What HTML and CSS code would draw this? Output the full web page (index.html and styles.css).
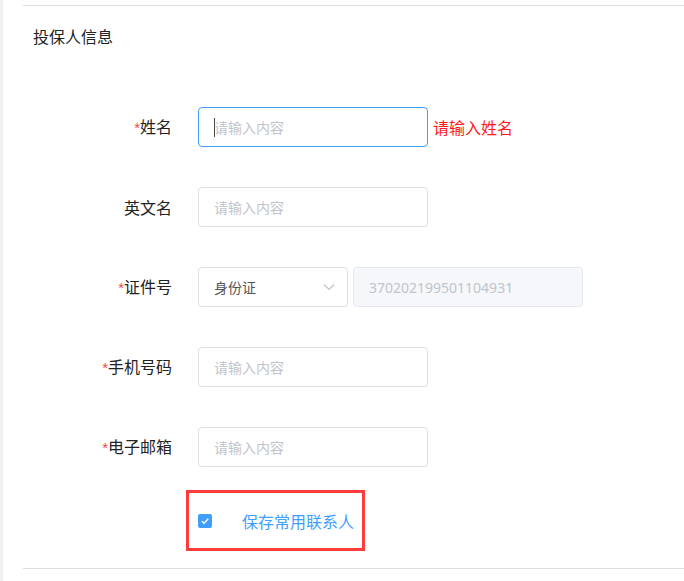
FILE: index.html
```html
<!DOCTYPE html>
<html lang="zh">
<head>
<meta charset="utf-8">
<title>投保人信息</title>
<link rel="stylesheet" href="styles.css">
</head>
<body>
<div class="page">
  <div class="card">
    <div class="divider"></div>
    <h3 class="title">投保人信息</h3>
    <div class="form">
      <div class="row">
        <div class="label"><span class="req">*</span>姓名</div>
        <div class="control">
          <div class="input focused"><span class="caret"></span><span class="ph">请输入内容</span></div>
          <span class="error">请输入姓名</span>
        </div>
      </div>
      <div class="row">
        <div class="label">英文名</div>
        <div class="control">
          <div class="input"><span class="ph">请输入内容</span></div>
        </div>
      </div>
      <div class="row">
        <div class="label"><span class="req">*</span>证件号</div>
        <div class="control">
          <div class="select"><span class="val">身份证</span>
            <svg class="chev" width="12" height="8" viewBox="0 0 12 8"><path d="M1 1.5 L6 6.5 L11 1.5" fill="none" stroke="#c0c4cc" stroke-width="1.2"/></svg>
          </div>
          <div class="input disabled"><span class="dis">370202199501104931</span></div>
        </div>
      </div>
      <div class="row">
        <div class="label"><span class="req">*</span>手机号码</div>
        <div class="control">
          <div class="input"><span class="ph">请输入内容</span></div>
        </div>
      </div>
      <div class="row">
        <div class="label"><span class="req">*</span>电子邮箱</div>
        <div class="control">
          <div class="input"><span class="ph">请输入内容</span></div>
        </div>
      </div>
      <div class="row check-row">
        <div class="label"></div>
        <div class="control">
          <div class="highlight">
            <span class="checkbox">
              <svg width="14" height="14" viewBox="0 0 14 14"><path d="M3.8 7.2 L6 9.3 L10.3 4.8" fill="none" stroke="#fff" stroke-width="1.4"/></svg>
            </span>
            <span class="check-label">保存常用联系人</span>
          </div>
        </div>
      </div>
    </div>
    <div class="divider bottom"></div>
  </div>
</div>
</body>
</html>
```
FILE: styles.css
```css
html, body {
  margin: 0;
  padding: 0;
  background: #fff;
}
body {
  font-family: "Noto Sans", "Noto Sans CJK SC", sans-serif;
  color: #222;
}
.page {
  border-left: 3px solid #f0f0f0;
  min-height: 581px;
  box-sizing: border-box;
}
.card {
  padding: 5px 0 0 20px;
}
.divider {
  height: 1px;
  background: #dedede;
}
.title {
  margin: 18px 0 0 10px;
  font-size: 16px;
  font-weight: normal;
  line-height: 24px;
  color: #222;
  font-family: "Noto Sans CJK SC", sans-serif;
}
.form {
  margin-top: 59px;
  display: flex;
  flex-direction: column;
  gap: 40px;
}
.row {
  display: grid;
  grid-template-columns: 149px 1fr;
  column-gap: 26px;
  align-items: center;
  height: 40px;
}
.label {
  text-align: right;
  font-size: 16px;
  line-height: 20px;
  color: #222;
  font-family: "Noto Sans CJK SC", sans-serif;
  margin-top: -1px;
}
.req {
  color: #f04a4a;
  font-family: "Liberation Sans", sans-serif;
  font-size: 15px;
}
.control {
  display: flex;
  align-items: center;
  gap: 5px;
}
.input, .select {
  box-sizing: border-box;
  height: 40px;
  width: 230px;
  border: 1px solid #dcdfe6;
  border-radius: 4px;
  display: flex;
  align-items: center;
  padding: 0 15px;
  font-size: 14px;
}
.input.focused {
  border-color: #409eff;
}
.caret {
  display: inline-block;
  width: 1px;
  height: 19px;
  background: #444;
  margin-right: -1px;
}
.ph {
  color: #c0c4cc;
  font-family: "Noto Sans CJK SC", sans-serif;
}
.error {
  color: #ff1a1a;
  font-size: 16px;
  font-family: "Noto Sans CJK SC", sans-serif;
}
.select {
  width: 150px;
  justify-content: space-between;
  padding-right: 12px;
}
.val {
  color: #555;
  font-family: "Noto Sans CJK SC", sans-serif;
}
.chev {
  display: block;
}
.input.disabled {
  background: #f5f7fa;
  border-color: #e4e7ed;
}
.dis {
  color: #c0c4cc;
  font-family: "Noto Sans", sans-serif;
}
.form .check-row {
  margin-top: -17px;
  height: 61px;
}
.highlight {
  box-sizing: border-box;
  margin-left: -12px;
  width: 179px;
  height: 61px;
  border: 3px solid #ff3b3b;
  display: flex;
  align-items: center;
  padding-left: 9px;
  gap: 30px;
}
.checkbox {
  width: 14px;
  height: 14px;
  background: #409eff;
  border-radius: 2px;
  display: block;
  flex: none;
}
.checkbox svg {
  display: block;
}
.check-label {
  color: #409eff;
  font-size: 16px;
  font-family: "Noto Sans CJK SC", sans-serif;
  line-height: 20px;
}
.divider.bottom {
  margin-top: 17px;
}
```
